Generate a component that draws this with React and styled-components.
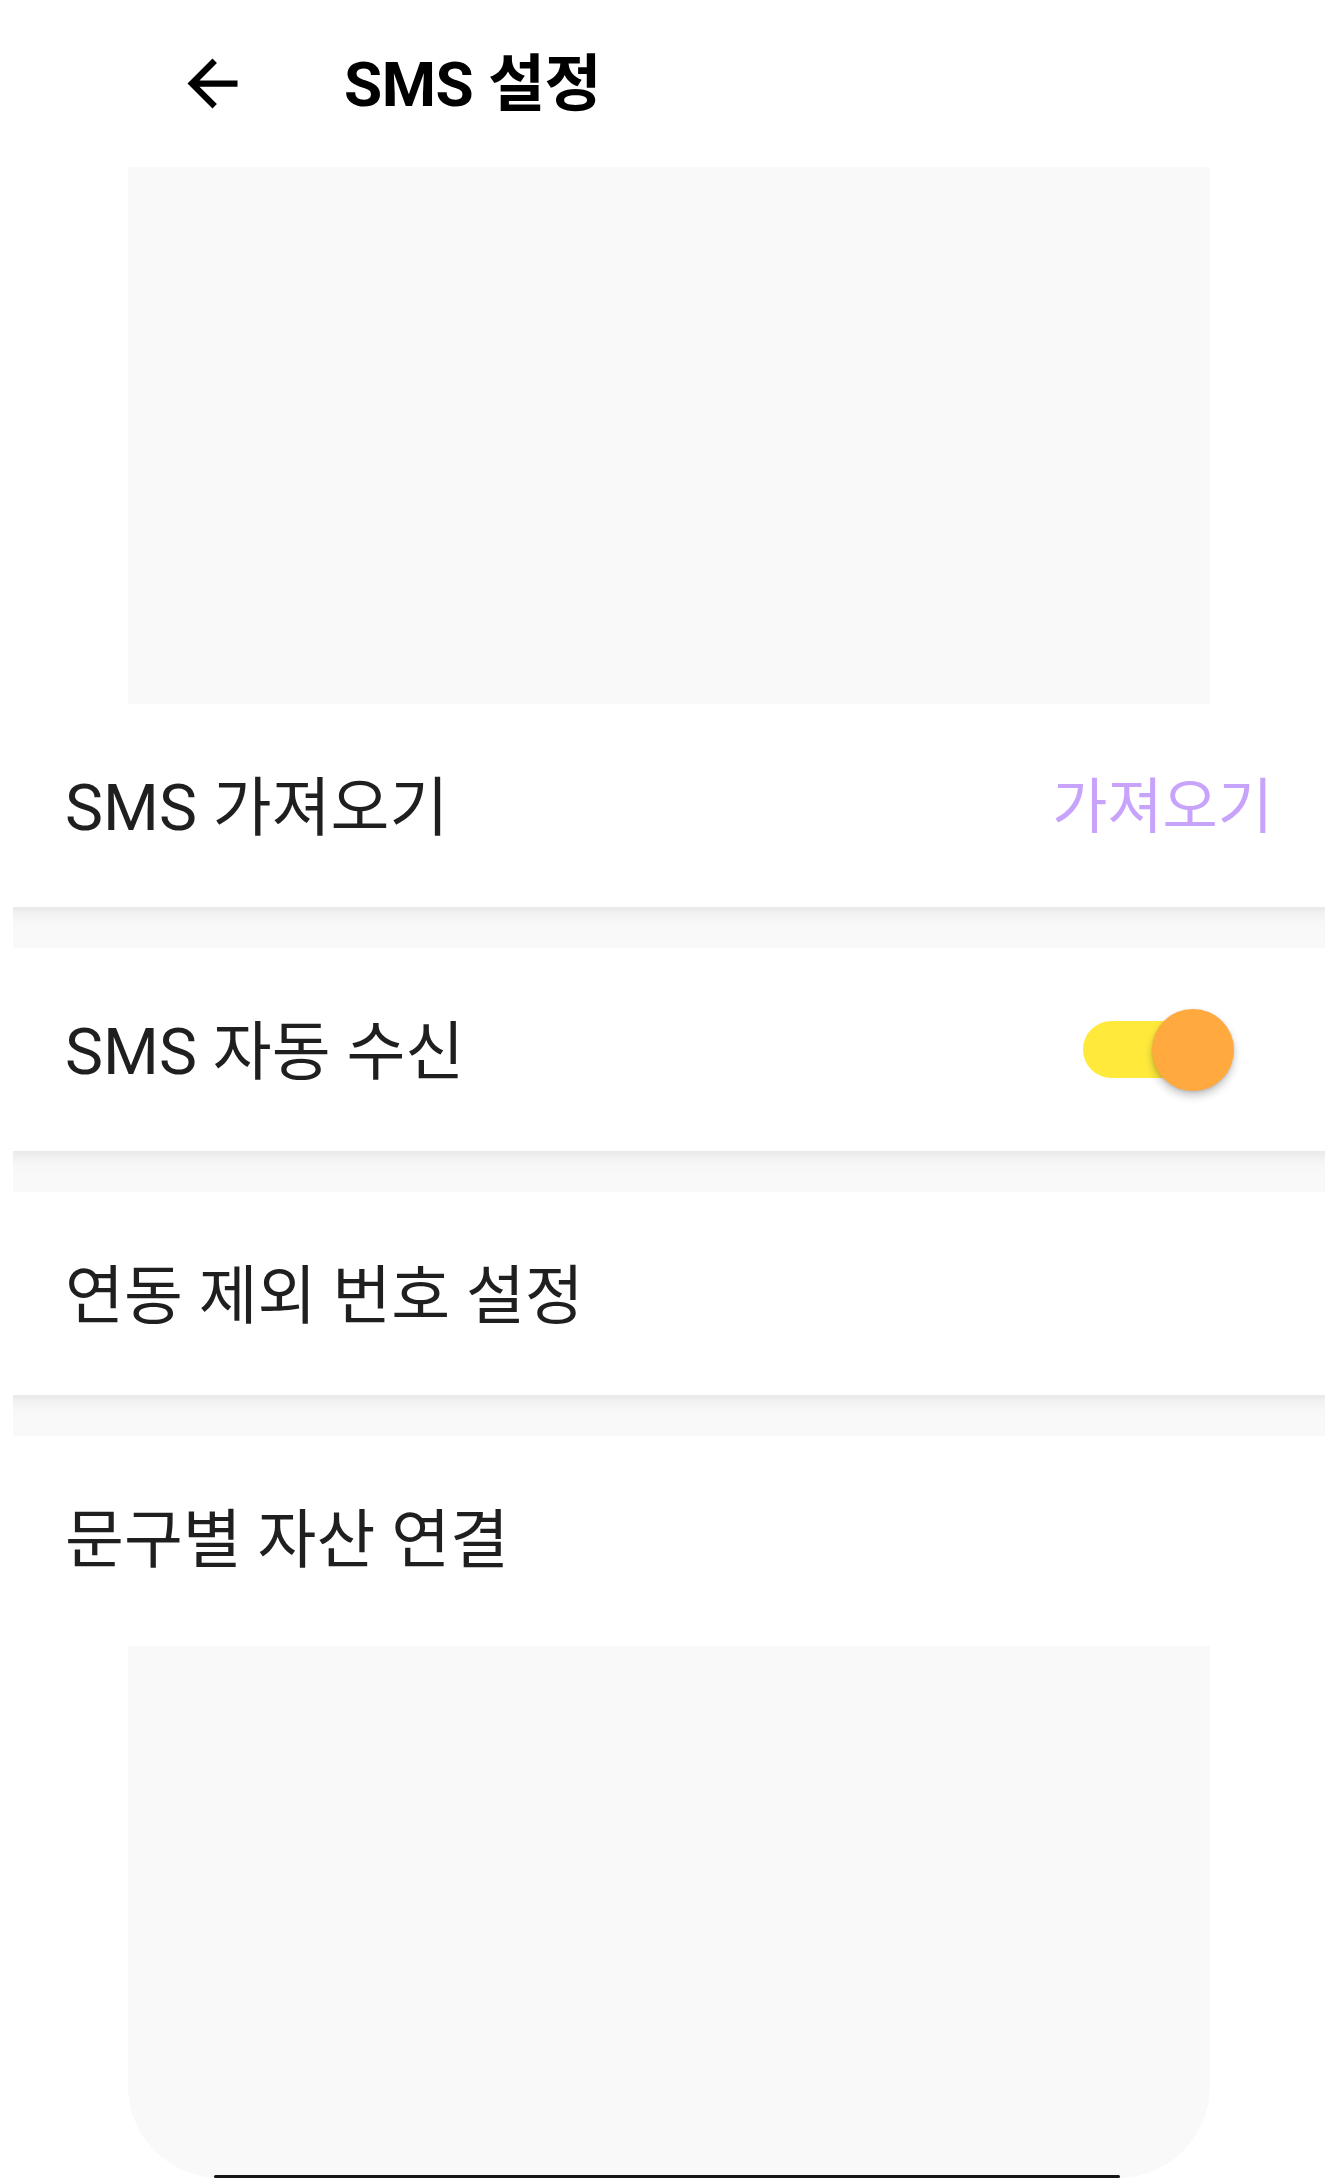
import React, { useState } from 'react';
import styled, { createGlobalStyle } from 'styled-components';

const GlobalStyle = createGlobalStyle`
  html, body {
    margin: 0;
    padding: 0;
    background: #ffffff;
  }
  body {
    font-family: Roboto, "Noto Sans CJK KR", sans-serif;
    color: #1f1f1f;
  }
`;

const settings = [
  { key: 'import', label: 'SMS 가져오기', action: '가져오기' },
  { key: 'auto', label: 'SMS 자동 수신', toggle: true },
  { key: 'exclude', label: '연동 제외 번호 설정' },
  { key: 'asset', label: '문구별 자산 연결' },
];

export default function App() {
  const [autoReceive, setAutoReceive] = useState(true);

  return (
    <Page>
      <GlobalStyle />
      <Header>
        <BackButton aria-label="뒤로">
          <svg viewBox="0 0 24 24" width="75" height="75">
            <path d="M20 11H7.83l5.59-5.59L12 4l-8 8 8 8 1.41-1.41L7.83 13H20v-2z" fill="#000" />
          </svg>
        </BackButton>
        <Title>SMS 설정</Title>
      </Header>

      <AdSlot />

      <List>
        {settings.map((item, i) => (
          <React.Fragment key={item.key}>
            {i > 0 && <Divider />}
            <Row>
              <Label>{item.label}</Label>
              {item.action && <ActionText>{item.action}</ActionText>}
              {item.toggle && (
                <Switch $on={autoReceive} onClick={() => setAutoReceive((v) => !v)}>
                  <Thumb $on={autoReceive} />
                </Switch>
              )}
            </Row>
          </React.Fragment>
        ))}
      </List>

      <AdSlot $bottom />
    </Page>
  );
}

const Page = styled.div`
  width: 1338px;
  height: 2178px;
  overflow: hidden;
  display: flex;
  flex-direction: column;
  background: #fff;
`;

const Header = styled.header`
  height: 167px;
  display: flex;
  align-items: center;
  padding-left: 175px;
  box-sizing: border-box;
`;

const BackButton = styled.button`
  width: 75px;
  height: 75px;
  padding: 0;
  border: none;
  background: transparent;
  display: flex;
  align-items: center;
  justify-content: center;
  margin-right: 94px;
`;

const Title = styled.h1`
  margin: 0 0 10px;
  font-size: 62px;
  font-weight: 700;
  color: #000;
  letter-spacing: -0.5px;
`;

const AdSlot = styled.div`
  position: relative;
  width: 1082px;
  margin: 0 auto;
  flex: ${(p) => (p.$bottom ? '1 0 auto' : '0 0 537px')};
  margin-top: ${(p) => (p.$bottom ? '7px' : '0')};
  background: #f9f9f9;
  border-radius: ${(p) => (p.$bottom ? '0 0 92px 92px' : '0')};

  &::after {
    content: '';
    display: ${(p) => (p.$bottom ? 'block' : 'none')};
    position: absolute;
    left: 86px;
    right: 90px;
    bottom: 0;
    height: 3px;
    border-radius: 2px;
    background: #161616;
  }
`;

const List = styled.div`
  margin: 0 13px;
  display: flex;
  flex-direction: column;
`;

const Divider = styled.div`
  height: 41px;
  background: linear-gradient(#e9e9e9 0, #f1f1f1 6px, #f7f7f7 14px, #f9f9f9 24px);
`;

const Row = styled.div`
  height: 203px;
  display: flex;
  align-items: center;
  justify-content: space-between;
  padding: 0 52px 8px;
  box-sizing: border-box;
  background: #fff;
`;

const Label = styled.span`
  font-size: 64px;
  font-weight: 400;
  color: #1f1f1f;
`;

const ActionText = styled.span`
  font-size: 60px;
  color: #c8a3fb;
`;

const Switch = styled.div`
  position: relative;
  width: 139px;
  height: 57px;
  border-radius: 29px;
  margin: 8px 51px 0 0;
  background: ${(p) => (p.$on ? '#ffea3c' : '#cfcfcf')};
  cursor: pointer;
`;

const Thumb = styled.div`
  position: absolute;
  top: -12px;
  left: ${(p) => (p.$on ? '69px' : '-12px')};
  width: 82px;
  height: 82px;
  border-radius: 50%;
  background: ${(p) => (p.$on ? '#ffa93f' : '#f5f5f5')};
  box-shadow: 0 5px 9px rgba(0, 0, 0, 0.22), 0 1px 3px rgba(0, 0, 0, 0.12);
`;
